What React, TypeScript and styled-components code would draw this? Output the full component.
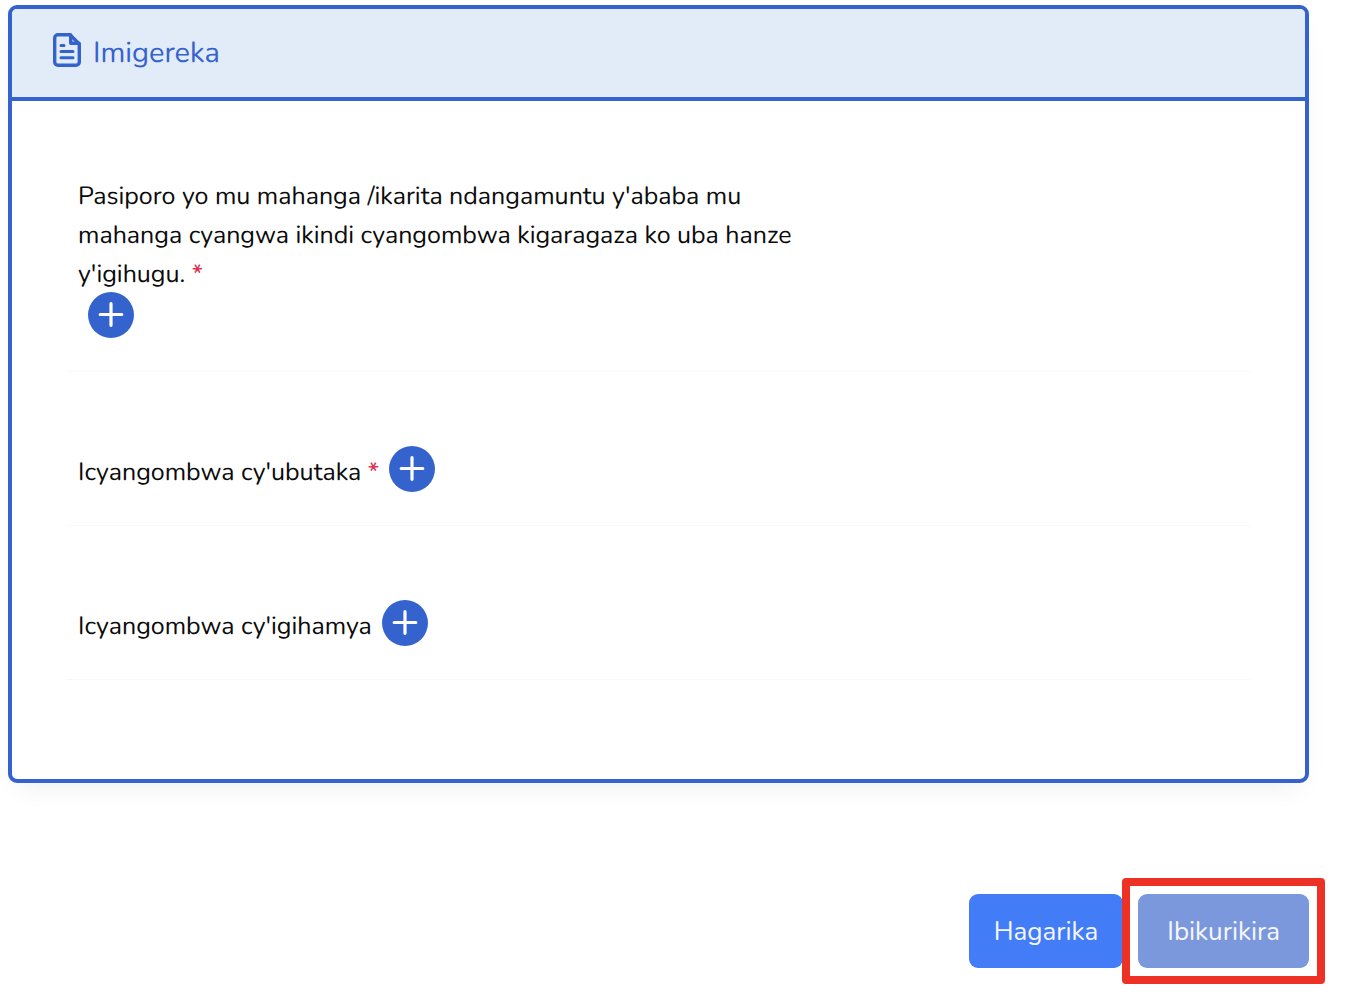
import React from "react";
import styled, { createGlobalStyle } from "styled-components";

const blue = "#3563cd";

const GlobalStyle = createGlobalStyle`
  *, *::before, *::after { box-sizing: border-box; }
  body {
    margin: 0;
    background: #fff;
    color: #0b0b0b;
    font-family: Nunito, "Noto Sans", sans-serif;
    font-size: 25px;
    line-height: 39px;
    text-rendering: geometricPrecision;
  }
`;

const Page = styled.main`
  padding: 5px 39px 34px 8px;
`;

const Card = styled.section`
  border: 4px solid ${blue};
  border-radius: 9px;
  background: #fff;
  box-shadow: 0 12px 28px -12px rgba(0, 0, 0, 0.09);
`;

const CardHeader = styled.header`
  display: flex;
  align-items: center;
  gap: 12px;
  height: 92px;
  padding: 0 41px;
  border-bottom: 4px solid ${blue};
  border-radius: 5px 5px 0 0;
  background: #e2ecf8;
  color: ${blue};
`;

const FileIcon = styled.svg`
  flex: none;
  width: 28px;
  height: 34px;
  margin-bottom: 6px;
`;

const Title = styled.h1`
  margin: 0;
  font-size: 29px;
  font-weight: 400;
`;

const Attachments = styled.ul`
  margin: 0;
  padding: 0 54px 99px;
  list-style: none;
`;

const AddButton = styled.button`
  display: flex;
  flex: none;
  align-items: center;
  justify-content: center;
  width: 46px;
  height: 46px;
  margin: 0 0 0 10px;
  padding: 0;
  border: 0;
  border-radius: 50%;
  background: ${blue};
  color: #fff;
  cursor: pointer;
`;

const Attachment = styled.li<{ $stacked?: boolean }>`
  display: flex;
  flex-direction: ${(p) => (p.$stacked ? "column" : "row")};
  align-items: ${(p) => (p.$stacked ? "flex-start" : "flex-end")};
  padding: ${(p) => (p.$stacked ? 76 : 74)}px 12px 33px;
  border-bottom: 1px solid #f8f8f8;

  ${AddButton} {
    margin-top: ${(p) => (p.$stacked ? -2 : 0)}px;
  }
`;

const Label = styled.span`
  max-width: 63%;
`;

const Required = styled.span`
  color: #dc3550;
  font-weight: 500;
`;

const Actions = styled.footer`
  display: flex;
  justify-content: flex-end;
  gap: 15px;
  margin-top: 111px;
`;

const Highlight = styled.div`
  position: relative;

  &::after {
    content: "";
    position: absolute;
    inset: -16px;
    border: 8px solid #ed3124;
    border-radius: 4px;
    pointer-events: none;
  }
`;

const ActionButton = styled.button<{ $muted?: boolean }>`
  height: 74px;
  padding: 0 ${(p) => (p.$muted ? 29 : 25)}px;
  border: 0;
  border-radius: 9px;
  background: ${(p) => (p.$muted ? "#7c98dc" : "#437cf7")};
  color: #f4f7ff;
  font: inherit;
  font-size: 26px;
  cursor: pointer;
`;

type Item = { label: string; required?: boolean; stacked?: boolean };

const items: Item[] = [
  {
    label:
      "Pasiporo yo mu mahanga /ikarita ndangamuntu y'ababa mu mahanga cyangwa ikindi cyangombwa kigaragaza ko uba hanze y'igihugu.",
    required: true,
    stacked: true,
  },
  { label: "Icyangombwa cy'ubutaka", required: true },
  { label: "Icyangombwa cy'igihamya" },
];

export default function App() {
  return (
    <>
      <GlobalStyle />
      <Page>
        <Card>
          <CardHeader>
            <FileIcon viewBox="0 0 28 34" fill="none" stroke="currentColor" strokeWidth="3.4" strokeLinecap="round" strokeLinejoin="round" aria-hidden="true">
              <path d="M17 1.7H5A3.3 3.3 0 0 0 1.7 5v24A3.3 3.3 0 0 0 5 32.3h18a3.3 3.3 0 0 0 3.3-3.3V11z" />
              <path d="M17.7 2v8.3H26" />
              <path d="M8 12.5h3M8 18.5h12M8 24.8h12" strokeWidth="3" />
            </FileIcon>
            <Title>Imigereka</Title>
          </CardHeader>
          <Attachments>
            {items.map((item, i) => (
              <Attachment key={item.label} $stacked={item.stacked}>
                <Label id={`attachment-${i}`}>
                  {item.label}
                  {item.required && " "}
                  {item.required && <Required>*</Required>}
                </Label>
                <AddButton type="button" aria-labelledby={`attachment-${i}`}>
                  <svg width="26" height="26" viewBox="0 0 26 26" stroke="currentColor" strokeWidth="3.2" strokeLinecap="round" aria-hidden="true">
                    <path d="M13 1.7v21.6M2.2 12.5h21.6" />
                  </svg>
                </AddButton>
              </Attachment>
            ))}
          </Attachments>
        </Card>
        <Actions>
          <ActionButton type="button">Hagarika</ActionButton>
          <Highlight>
            <ActionButton type="button" $muted>Ibikurikira</ActionButton>
          </Highlight>
        </Actions>
      </Page>
    </>
  );
}
